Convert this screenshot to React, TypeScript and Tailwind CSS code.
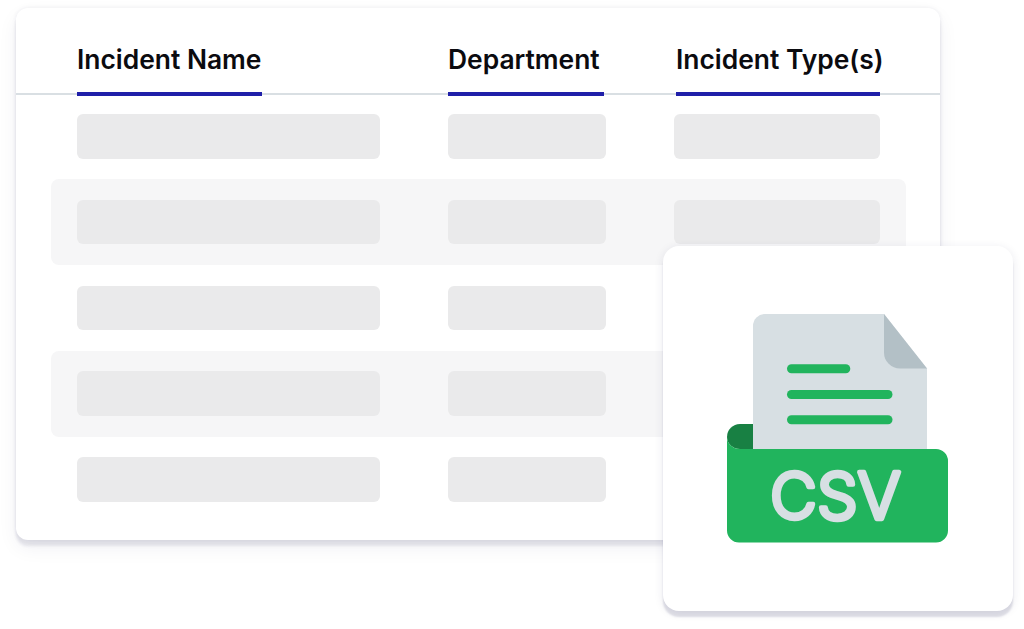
const rows = [false, true, false, true, false];

function CsvIcon() {
  return (
    <svg width="221" height="229" viewBox="0 0 221 229" fill="none" aria-hidden="true">
      <path d="M26 135V12A12 12 0 0 1 38 0H157L200 54.5V135Z" fill="#d7dfe3" />
      <path d="M157 0L200 54.5H173A16 16 0 0 1 157 38.5Z" fill="#b3c0c6" />
      <rect x="60" y="50.3" width="63.3" height="9" rx="4.5" fill="#21b45d" />
      <rect x="60" y="76" width="105.5" height="9" rx="4.5" fill="#21b45d" />
      <rect x="60" y="101.3" width="105.5" height="9" rx="4.5" fill="#21b45d" />
      <path d="M26 110H13A13 13 0 0 0 0 123A13 12 0 0 0 13 135H26Z" fill="#188043" />
      <path
        d="M0 123A13 12 0 0 0 13 135H209A12 12 0 0 1 221 147V216.500A12 12 0 0 1 209 228.500H12A12 12 0 0 1 0 216.500Z"
        fill="#21b45d"
      />
      <text
        x="43"
        y="205.300"
        fontSize="65"
        fontWeight="300"
        fill="#d7dfe3"
        stroke="#d7dfe3"
        strokeWidth="4.500"
        strokeLinejoin="round"
        textLength="131"
        lengthAdjust="spacingAndGlyphs"
      >
        CSV
      </text>
    </svg>
  );
}

function HeaderTab({ label, className }: { label: string; className: string }) {
  return (
    <div className={`-mb-[3px] flex h-[60px] items-start border-b-4 border-[#1f1fa9] pt-[6px] text-[26.4px] leading-[34px] font-semibold whitespace-nowrap text-[#0b0b0f] ${className}`}>
      {label}
    </div>
  );
}

function Row({ shaded }: { shaded: boolean }) {
  return (
    <div className={`flex h-[85.9px] gap-[68px] rounded-lg px-[26px] pt-[20.8px] ${shaded ? "bg-[#f6f6f7]" : ""}`}>
      <div className="h-[44.8px] w-[303px] shrink-0 rounded-md bg-[#eaeaeb]" />
      <div className="h-[44.8px] w-[158px] shrink-0 rounded-md bg-[#eaeaeb]" />
      <div className="h-[44.8px] w-[206px] shrink-0 rounded-md bg-[#eaeaeb]" />
    </div>
  );
}

export default function App() {
  return (
    <div className="relative h-[629px] w-[1024px] overflow-hidden bg-white pt-2 pl-4 font-[Inter,sans-serif]">
      <div className="h-[532px] w-[924px] rounded-xl bg-white shadow-[0_6px_3px_rgba(40,40,90,0.1),0_8px_20px_rgba(40,40,90,0.06),0_0_4px_rgba(40,40,90,0.08)]">
        <div className="flex h-[87px] items-end border-b-2 border-[#d9dfe3] pl-[61px]">
          <HeaderTab label="Incident Name" className="w-[185px]" />
          <HeaderTab label="Department" className="ml-[186px] w-[156px]" />
          <HeaderTab label="Incident Type(s)" className="ml-[72px] w-[204px]" />
        </div>
        <div className="-mt-0.5 pr-[34px] pl-[35px]">
          {rows.map((shaded, i) => (
            <Row key={i} shaded={shaded} />
          ))}
        </div>
      </div>
      <div className="absolute top-[246px] left-[663px] flex h-[365px] w-[350px] rounded-2xl bg-white pt-[68px] pl-[64px] shadow-[0_6px_2px_rgba(40,40,90,0.14),0_2px_10px_rgba(40,40,90,0.1)]">
        <CsvIcon />
      </div>
    </div>
  );
}
